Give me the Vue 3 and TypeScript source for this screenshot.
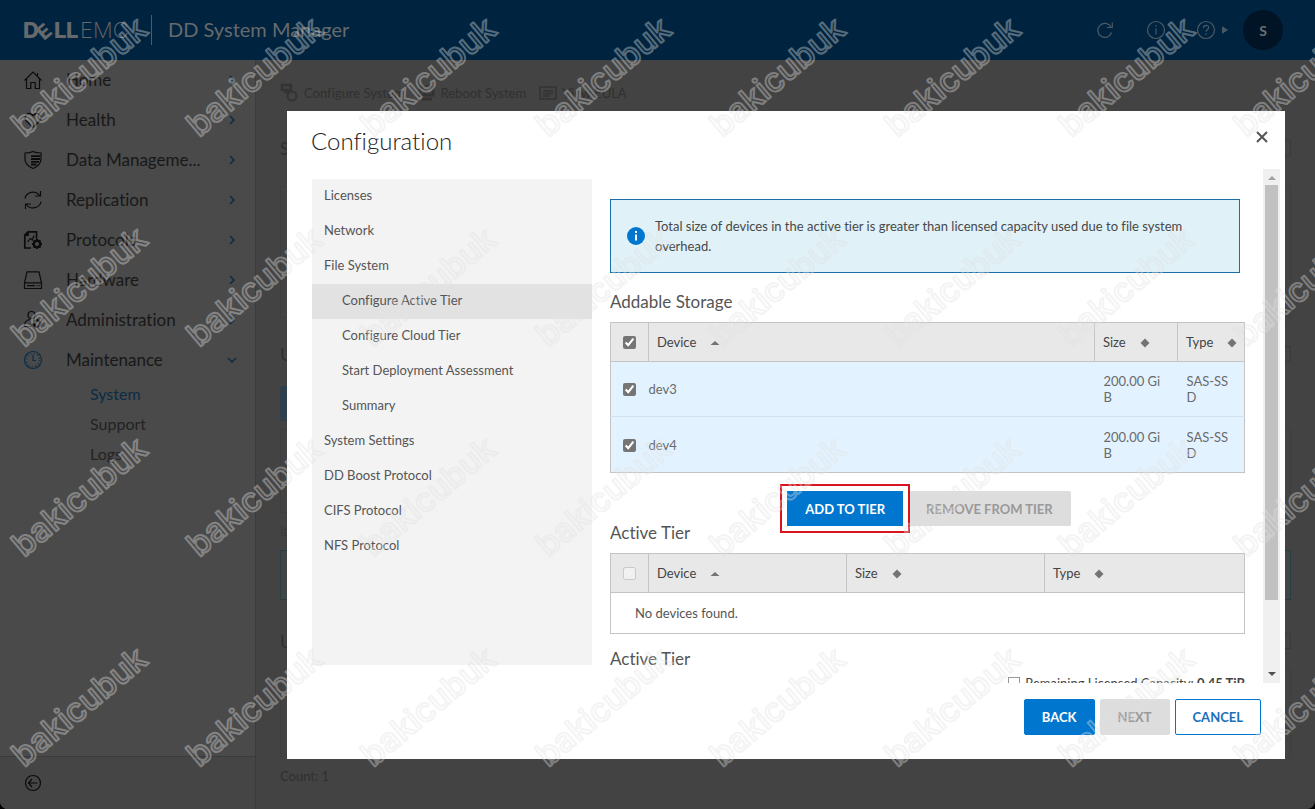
<script setup lang="ts">
import { ref } from 'vue'

interface NavItem { label: string; icon: string; open?: boolean }
interface Step { label: string; sub?: boolean; current?: boolean }
interface Device { name: string; size: string; type: string; selected: boolean }

const navItems: NavItem[] = [
  { label: 'Home', icon: 'home' },
  { label: 'Health', icon: 'health' },
  { label: 'Data Manageme...', icon: 'shield' },
  { label: 'Replication', icon: 'sync' },
  { label: 'Protocols', icon: 'protocols' },
  { label: 'Hardware', icon: 'drive' },
  { label: 'Administration', icon: 'admin' },
  { label: 'Maintenance', icon: 'clock', open: true },
]
const subItems = ['System', 'Support', 'Logs']

const steps: Step[] = [
  { label: 'Licenses' },
  { label: 'Network' },
  { label: 'File System' },
  { label: 'Configure Active Tier', sub: true, current: true },
  { label: 'Configure Cloud Tier', sub: true },
  { label: 'Start Deployment Assessment', sub: true },
  { label: 'Summary', sub: true },
  { label: 'System Settings' },
  { label: 'DD Boost Protocol' },
  { label: 'CIFS Protocol' },
  { label: 'NFS Protocol' },
]

const allSelected = ref(true)
const devices = ref<Device[]>([
  { name: 'dev3', size: '200.00 GiB', type: 'SAS-SSD', selected: true },
  { name: 'dev4', size: '200.00 GiB', type: 'SAS-SSD', selected: true },
])

const marks: { x: number; y: number }[] = []
for (let row = 0; row < 4; row++) {
  for (let col = 0; col < 8; col++) {
    marks.push({ x: 24 + Math.round(col * 174.5), y: 138 + row * 210 })
  }
}
</script>

<template>
  <div class="app">
    <header class="topbar">
      <svg class="logo" width="108" height="28" viewBox="0 -2 108 28" role="img" aria-label="DELLEMC">
        <g font-family="Inter, sans-serif" fill="currentColor">
          <g font-size="22" font-weight="800">
            <text x="-1" y="20">D</text>
            <text x="30" y="20">L</text>
            <text x="42" y="20">L</text>
            <text transform="translate(20 23) rotate(-40)" x="0" y="0" font-size="20">E</text>
          </g>
          <text x="56" y="20" font-size="22" font-weight="200">EMC</text>
        </g>
      </svg>
      <span class="bar-rule"></span>
      <span class="product">DD System Manager</span>
      <div class="bar-actions">
        <button class="bar-btn" aria-label="Refresh">
          <svg width="18" height="18" viewBox="0 0 18 18"><path d="M15.500 11.500a7 7 0 1 1-.6-5.600M16.300 1.500v5h-5.500" /></svg>
        </button>
        <button class="bar-btn info-btn" aria-label="Information">
          <svg width="20" height="20" viewBox="0 0 20 20"><circle cx="10" cy="10" r="8.500" /><path d="M10 8.500v6M10 5v1.600" /></svg>
        </button>
        <button class="bar-btn help-btn" aria-label="Help">
          <svg width="20" height="20" viewBox="0 0 20 20"><circle cx="10" cy="10" r="8.500" /><path d="M7.500 8c0-3.600 5.200-3.400 5.200-.4 0 2-2.600 2-2.600 4.200M10.100 13.400v1.600" /></svg>
          <svg width="6" height="8" viewBox="0 0 6 8"><path class="solid" d="M.5 1.200 5 4 .5 6.800z" /></svg>
        </button>
        <button class="avatar">S</button>
      </div>
    </header>

    <div class="shell">
      <nav class="sidebar">
        <ul class="nav-list">
          <li v-for="item in navItems" :key="item.label">
            <a href="#" class="nav-item" :class="{ open: item.open }">
              <svg class="nav-icon" width="20" height="20" viewBox="0 0 20 20">
                <g v-if="item.icon === 'home'"><path d="M1.500 10.500 10 2l8.500 8.500M3.500 9v9.500h4.300v-6h4.400v6h4.300V9M14.500 3v3.500" /></g>
                <g v-else-if="item.icon === 'health'"><path d="M10 17.500 3 10.500C-.5 6.500 5.500.5 10 5.500c4.500-5 10.500 1 7 5z" /></g>
                <g v-else-if="item.icon === 'shield'"><path d="M10 1.500c2.500 1.300 5 1.500 8 1.500v6c0 4.500-3.500 7.500-8 9.500-4.500-2-8-5-8-9.500V3c3 0 5.500-.2 8-1.500z" /><path d="M8 6.200h9M8 9h9M8 11.800h8M8 14.500h5.500" stroke-width="1.800" /></g>
                <g v-else-if="item.icon === 'sync'"><path d="M2 8.500C3 2 12.500-.5 16.500 5.500M17.500 1v5H12M18 11.500c-1 6.500-10.500 9-14.500 3M2.500 19v-5H8" /></g>
                <g v-else-if="item.icon === 'protocols'"><path d="M8 18H1.800V5L5 1.800h8.500v7M1.800 5.200H5V2" stroke-width="1.700" /><path d="m4.500 12 2.800-3.500 2 1.500L11 5.500" /><circle cx="14" cy="14" r="3.200" stroke-width="2.400" /><path d="M14 9v1.500M14 17.500V19M9 14h1.500M17.500 14H19M10.500 10.500l1 1M16.500 16.500l1 1M17.500 10.500l-1 1M11.500 16.500l-1 1" stroke-width="2" /></g>
                <g v-else-if="item.icon === 'drive'"><path d="M4 1.800h12l2.500 11v5.700h-17v-5.700zM1.500 12.800h17M4 15.700h8M13.500 15.700h1M15.700 15.700h1" /></g>
                <g v-else-if="item.icon === 'admin'"><circle cx="8.500" cy="5" r="3.500" /><path d="M1.500 16.500c0-5 3-7 6-7M1.500 16.500h7" /><circle cx="14" cy="13.500" r="3" stroke-width="2" /><path d="M14 9v1.500M14 16.500V18M9.500 13.500H11M17 13.500h1.500" stroke-width="2" /></g>
                <g v-else><circle cx="10" cy="10" r="8.500" /><path d="M10 5v5.500h3" /><circle cx="10" cy="10" r="6.500" stroke-width="1.500" stroke-dasharray="1 2.400" /></g>
              </svg>
              <span class="nav-label">{{ item.label }}</span>
              <svg class="chev" width="10" height="10" viewBox="0 0 10 10">
                <path v-if="item.open" d="m1 3 4 4 4-4" />
                <path v-else d="m3 1 4 4-4 4" />
              </svg>
            </a>
            <ul v-if="item.open" class="sub-list">
              <li v-for="(sub, i) in subItems" :key="sub"><a href="#" :class="{ active: i === 0 }">{{ sub }}</a></li>
            </ul>
          </li>
        </ul>
        <div class="sidebar-foot">
          <button class="collapse" aria-label="Collapse menu">
            <svg width="18" height="18" viewBox="0 0 18 18"><circle cx="9" cy="9" r="7.500" /><path d="M13.500 9h-9M8 5 4.500 9 8 13" /></svg>
          </button>
        </div>
      </nav>

      <main class="page">
        <div class="toolbar">
          <a href="#" class="tool"><svg width="20" height="20" viewBox="0 0 20 20"><path d="M2 2h9v5H2zM4 9h5" stroke-width="2.500" /><circle cx="12" cy="13" r="4.500" stroke-width="2" /></svg>Configure System</a>
          <a href="#" class="tool"><svg width="20" height="20" viewBox="0 0 20 20"><path d="M3 4h13v8H3zM5 16h10" stroke-width="3" /></svg>Reboot System</a>
          <a href="#" class="tool"><svg width="20" height="20" viewBox="0 0 20 20"><path d="M2 4h16v12H2zM5 8h10M5 10.500h10M5 13h7" stroke-width="1.500" /></svg>View EULA</a>
        </div>
        <div class="page-head"><span>S</span><i class="mini"></i></div>
        <div class="panel summary-panel"></div>
        <div class="page-head second"><span>U</span><i class="mini"></i></div>
        <div class="page-action"></div>
        <div class="panel list-panel"></div>
        <p class="items">It</p>
        <div class="note"></div>
        <div class="page-head third"><span>U</span><i class="mini"></i></div>
        <div class="panel history-panel"></div>
        <p class="count">Count: 1</p>
      </main>
    </div>

    <div class="overlay">
      <section class="dialog" role="dialog" aria-modal="true" aria-labelledby="dlg-title">
        <div class="dlg-head">
          <h1 id="dlg-title">Configuration</h1>
          <button class="close" aria-label="Close">
            <svg width="14" height="14" viewBox="0 0 14 14"><path d="m2 2 10 10M12 2 2 12" /></svg>
          </button>
        </div>

        <div class="dlg-body">
          <nav class="steps">
            <a v-for="s in steps" :key="s.label" href="#" :class="{ sub: s.sub, current: s.current }">{{ s.label }}</a>
          </nav>

          <div class="pane">
            <div class="pane-inner">
              <div class="alert" role="status">
                <svg width="18" height="18" viewBox="0 0 18 18"><circle cx="9" cy="9" r="9" fill="#0076ce" /><path d="M9 7.500v6M9 4v2" stroke="#fff" stroke-width="2" /></svg>
                <p>Total size of devices in the active tier is greater than licensed capacity used due to file system overhead.</p>
              </div>

              <h2>Addable Storage</h2>
              <table class="grid addable">
                <colgroup><col class="c-check" /><col /><col class="c-size" /><col class="c-type" /></colgroup>
                <thead>
                  <tr>
                    <th><input v-model="allSelected" type="checkbox" aria-label="Select all devices" /></th>
                    <th>Device<svg class="sort" width="10" height="10" viewBox="0 0 10 10"><path d="M.5 7 5 3l4.500 4z" /></svg></th>
                    <th>Size<svg class="sort" width="10" height="10" viewBox="0 0 10 10"><path d="M5 .5 9.500 5 5 9.500.5 5z" /></svg></th>
                    <th>Type<svg class="sort" width="10" height="10" viewBox="0 0 10 10"><path d="M5 .5 9.500 5 5 9.500.5 5z" /></svg></th>
                  </tr>
                </thead>
                <tbody>
                  <tr v-for="d in devices" :key="d.name">
                    <td class="check"><input v-model="d.selected" type="checkbox" :aria-label="d.name" /></td>
                    <td class="name">{{ d.name }}</td>
                    <td class="wrap">{{ d.size }}</td>
                    <td class="wrap">{{ d.type }}</td>
                  </tr>
                </tbody>
              </table>

              <div class="tier-actions">
                <button class="btn primary marked">ADD TO TIER</button>
                <button class="btn" disabled>REMOVE FROM TIER</button>
              </div>

              <h2 class="tier-title">Active Tier</h2>
              <table class="grid active-tier">
                <colgroup><col class="c-check" /><col class="c-third" /><col class="c-third" /><col /></colgroup>
                <thead>
                  <tr>
                    <th><input type="checkbox" disabled aria-label="Select all active tier devices" /></th>
                    <th>Device<svg class="sort" width="10" height="10" viewBox="0 0 10 10"><path d="M.5 7 5 3l4.500 4z" /></svg></th>
                    <th>Size<svg class="sort" width="10" height="10" viewBox="0 0 10 10"><path d="M5 .5 9.500 5 5 9.500.5 5z" /></svg></th>
                    <th>Type<svg class="sort" width="10" height="10" viewBox="0 0 10 10"><path d="M5 .5 9.500 5 5 9.500.5 5z" /></svg></th>
                  </tr>
                </thead>
                <tbody><tr><td colspan="4" class="empty">No devices found.</td></tr></tbody>
              </table>

              <h2 class="usage-title">Active Tier</h2>
              <p class="legend"><i></i><span>Remaining Licensed Capacity: <b>0.45 TiB</b></span></p>
            </div>
            <div class="scrollbar">
              <svg width="16" height="16" viewBox="0 0 16 16"><path fill="#a3a3a3" d="M4 11 8 7l4 4z" /></svg>
              <div class="track"><div class="thumb"></div></div>
              <svg width="16" height="16" viewBox="0 0 16 16"><path fill="#505050" d="m4 5 4 4 4-4z" /></svg>
            </div>
          </div>
        </div>

        <div class="dlg-foot">
          <button class="btn primary">BACK</button>
          <button class="btn" disabled>NEXT</button>
          <button class="btn outline">CANCEL</button>
        </div>
      </section>
    </div>

    <svg class="watermark" aria-hidden="true">
      <text v-for="(m, i) in marks" :key="i" :transform="`translate(${m.x} ${m.y}) rotate(-40)`">bakicubuk</text>
    </svg>
  </div>
</template>

<style>
body { background: #000; overflow: hidden; }
</style>

<style scoped>
* { box-sizing: border-box; }
.app {
  position: relative;
  height: 100vh;
  display: flex;
  flex-direction: column;
  overflow: hidden;
  border-radius: 0 0 8px 8px;
  background: #434343;
  font-family: Lato, "Open Sans", sans-serif;
  font-size: 13px;
  font-weight: 400;
  font-variant-ligatures: none;
  color: #1d1d1d;
}
button, input { font: inherit; }
button { padding: 0; border: 0; background: none; }
ul { list-style: none; margin: 0; padding: 0; }
a { color: inherit; text-decoration: none; }
p, h1, h2 { margin: 0; font-weight: 300; }
svg { flex: none; fill: none; stroke-width: 1.2; }

.topbar {
  flex: none;
  height: 60px;
  display: flex;
  align-items: center;
  padding: 0 32px 0 24px;
  background: #00243f;
  color: #666a6d;
}
.bar-rule { width: 1px; height: 30px; margin: 0 16px 0 19px; background: #505a62; }
.product { padding-bottom: 2px; font-size: 20px; font-weight: 400; }
.bar-actions { display: flex; align-items: center; margin-left: auto; }
.bar-btn { display: flex; align-items: center; gap: 6px; color: #4c5964; }
.bar-btn svg { stroke: currentColor; }
.bar-btn .solid { fill: currentColor; }
.info-btn { margin-left: 32px; }
.help-btn { margin-left: 30px; margin-right: 15px; }
.avatar { width: 40px; height: 40px; border-radius: 50%; background: #001426; color: #6c6f72; font-size: 14px; font-weight: 700; }

.shell { flex: 1; display: flex; min-height: 0; }
.sidebar { width: 256px; flex: none; display: flex; flex-direction: column; background: #4a4a4a; border-right: 1px solid #3b3b3b; }
.nav-list { flex: 1; }
.nav-item { height: 40px; display: flex; align-items: center; padding: 0 18px 0 23px; font-size: 17px; line-height: 20px; color: #181818; }
.nav-icon { stroke: #0c0c0c; }
.open .nav-icon { stroke: #0b2c46; }
.nav-label { flex: 1; margin-left: 23px; padding-bottom: 1px; white-space: nowrap; }
.chev { stroke: #0b2c46; stroke-width: 1.6; }
.sub-list a { display: block; height: 30px; line-height: 28px; padding-left: 90px; font-size: 16px; color: #232323; }
.sub-list a.active { color: #0b2c46; }
.sidebar-foot { height: 53px; display: flex; align-items: center; padding-left: 24px; border-top: 1px solid #3a3a3a; background: #454545; }
.collapse { display: flex; }
.collapse svg { stroke: #0a0a0a; }

.page { flex: 1; min-width: 0; display: flex; flex-direction: column; padding: 23px 24px 0; color: #303030; }
.toolbar { display: flex; height: 20px; }
.tool { display: flex; align-items: center; gap: 4px; margin-right: 12px; color: #303030; }
.tool svg { stroke: #333; }
.page-head { display: flex; justify-content: space-between; align-items: center; height: 20px; margin-top: 35px; font-size: 17px; }
.page-head.second { margin-top: 26px; }
.page-head.third { margin-top: 31px; }
.mini { width: 30px; height: 16px; border: 1px solid #3a3a3a; }
.panel { border: 1px solid #3e3e3e; }
.summary-panel { height: 132px; margin-top: 28px; }
.page-action { width: 120px; height: 35px; margin-top: 22px; border-radius: 2px; background: #2f3f4c; }
.list-panel { height: 84px; margin-top: 8px; }
.items { height: 20px; margin-top: 8px; line-height: 20px; }
.note { height: 50px; margin-top: 9px; border: 1px solid #2a3d42; background: #404646; }
.history-panel { height: 88px; margin-top: 18px; }
.count { margin-top: 9px; line-height: 20px; font-weight: 400; }

.overlay { position: absolute; inset: 0; display: flex; padding: 111px 30px 50px 287px; }
.dialog { flex: 1; min-width: 0; display: flex; flex-direction: column; background: #fff; color: #444; font-weight: 400; }
.dlg-head { flex: none; height: 58px; display: flex; align-items: center; justify-content: space-between; padding: 2px 16px 0 24px; }
.dlg-head h1 { font-size: 24px; line-height: 28px; color: #222; }
.close { display: flex; margin-top: -8px; }
.close svg { stroke: #555; stroke-width: 2; }
.dlg-body { flex: 1; min-height: 0; display: flex; }
.steps { width: 280px; flex: none; margin: 10px 0 18px 25px; background: #f3f3f3; }
.steps a { display: block; height: 35px; line-height: 33px; padding-left: 12px; color: #555; }
.steps a.sub { padding-left: 30px; }
.steps a.current { background: #e2e2e2; }

.pane { flex: 1; min-width: 0; display: flex; padding-left: 18px; padding-right: 5px; }
.pane-inner { flex: 1; min-width: 0; overflow: hidden; padding: 30px 18px 0 0; }
.alert { display: flex; align-items: center; gap: 10px; height: 74px; margin-right: 5px; padding: 0 30px 0 16px; border: 1px solid #1a6fa8; background: #e0f1f7; color: #484848; }
.alert p { line-height: 20px; font-weight: 400; }
h2 { margin: 17px 0 8px; font-size: 17px; line-height: 24px; font-weight: 400; color: #555; }
.grid { width: 100%; table-layout: fixed; border-collapse: collapse; border: 1px solid #c4c4c4; }
.c-check { width: 38px; }
.c-size { width: 83px; }
.c-type { width: 67px; }
.c-third { width: 198px; }
.grid th { height: 39px; padding: 0 0 0 8px; border: 1px solid #c4c4c4; background: #e8e8e8; text-align: left; font-weight: 400; color: #444; white-space: nowrap; }
.grid td { padding: 0; }
.grid th:first-child { padding: 0; text-align: center; }
.check { text-align: center; }
.grid input { display: block; width: 13px; height: 13px; margin: 1px auto 0; accent-color: #757575; }
.sort { margin-left: 14px; vertical-align: -1px; fill: #747474; }
.addable tbody tr { height: 55px; background: #e3f2ff; border-top: 1px solid #d2e0ea; }
.addable tbody tr:last-child { height: 56px; }
.grid td { color: #6a6a6a; }
.grid td.wrap { padding: 0 15px 0 9px; line-height: 16px; word-break: break-all; }
.grid td.empty { height: 41px; padding-left: 24px; color: #555; }
.tier-actions { display: flex; justify-content: center; gap: 5px; margin: 18px 0 -5px; padding-left: 3px; }
.btn { height: 35px; padding: 0 17px; border: 1px solid #ddd; border-radius: 2px; background: #ddd; color: #999; font-size: 13px; font-weight: 700; white-space: nowrap; }
.btn.primary { background: #0076ce; border-color: #0076ce; color: #fff; }
.btn.outline { background: #fff; border-color: #0076ce; color: #1a6fb8; }
.btn.marked { position: relative; outline: 2px solid #d8141c; outline-offset: 5px; border-radius: 0; }
h2.tier-title { margin-top: 0; }
h2.usage-title { margin: 13px 0 0; }
.legend { display: flex; justify-content: flex-end; align-items: center; gap: 5px; line-height: 24px; white-space: nowrap; font-weight: 400; }
.legend i { width: 12px; height: 12px; border: 1px solid #999; }
.legend b { font-weight: 700; }
.scrollbar { width: 17px; flex: none; display: flex; flex-direction: column; align-items: center; background: #f0f0f0; }
.track { flex: 1; width: 13px; }
.thumb { height: 86%; background: #c1c1c1; }

.dlg-foot { flex: none; height: 76px; display: flex; justify-content: flex-end; gap: 5px; padding: 16px 24px 0 0; }
.dlg-foot .btn { height: 36px; }

.watermark { position: absolute; inset: 0; width: 100%; height: 100%; pointer-events: none; }
.watermark text { font-family: Inter, sans-serif; font-size: 33px; font-weight: 500; fill: none; stroke: rgba(226, 226, 226, 0.4); stroke-width: 2; stroke-linejoin: round; }
</style>
